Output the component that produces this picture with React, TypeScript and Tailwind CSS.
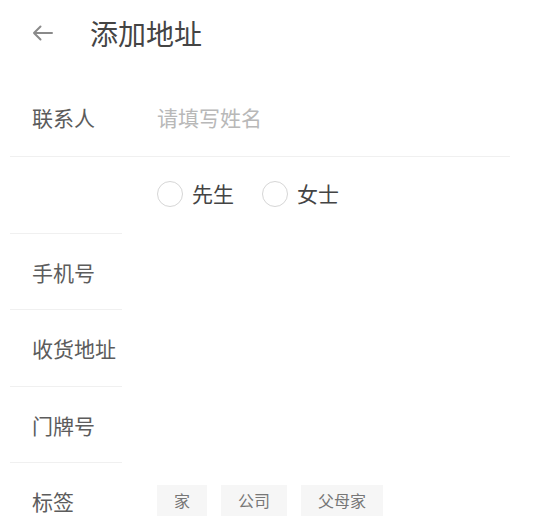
import React from "react";

const Row = ({ label, h, children }: { label: string; h: string; children?: React.ReactNode }) => (
  <div className={`flex mx-[10px] ${h}`}>
    <div className="w-[112px] h-full shrink-0 border-b border-[#f0f0f0] flex items-center pl-[22px] pt-[2px] text-[21px] text-[#5c5c5c] whitespace-nowrap">
      {label}
    </div>
    <div className="flex items-center pl-[35px]">{children}</div>
  </div>
);

const Radio = ({ text }: { text: string }) => (
  <div className="flex items-center">
    <span className="w-[26px] h-[26px] rounded-full border-[1.5px] border-[#d6d6d6]" />
    <span className="ml-[9px] text-[21px] text-[#444]">{text}</span>
  </div>
);

const Tag = ({ text }: { text: string }) => (
  <span className="h-[31px] px-[17px] flex items-center bg-[#f6f6f6] text-[16px] text-[#777]">{text}</span>
);

export default function App() {
  return (
    <div className="w-[538px] h-[532px] bg-white overflow-hidden font-['Noto_Sans_CJK_SC',sans-serif]">
      <div className="h-[66px] flex items-center pl-[32px]">
        <svg width="22" height="16" viewBox="0 0 22 16" fill="none" stroke="#8a8a8a" strokeWidth="2" strokeLinecap="round" strokeLinejoin="round">
          <path d="M2 8 H20 M8.5 1.5 L2 8 L8.5 14.5" />
        </svg>
        <span className="ml-[36px] text-[28px] text-[#444] leading-none">添加地址</span>
      </div>
      <div className="mt-[14px]">
        <div className="flex h-[77px] mx-[10px] w-[500px] border-b border-[#f0f0f0] items-center">
          <div className="w-[112px] pl-[22px] text-[21px] text-[#5c5c5c] whitespace-nowrap">联系人</div>
          <div className="pl-[35px] text-[21px] text-[#b8b8b8]">请填写姓名</div>
        </div>
        <Row label="" h="h-[77px]">
          <div className="flex items-center gap-[28px] pb-[4px]">
            <Radio text="先生" />
            <Radio text="女士" />
          </div>
        </Row>
        <Row label="手机号" h="h-[76px]" />
        <Row label="收货地址" h="h-[77px]" />
        <Row label="门牌号" h="h-[76px]" />
        <Row label="标签" h="h-[76px]">
          <div className="flex items-center gap-[14px] pb-[2px]">
            <Tag text="家" />
            <Tag text="公司" />
            <Tag text="父母家" />
          </div>
        </Row>
      </div>
    </div>
  );
}
